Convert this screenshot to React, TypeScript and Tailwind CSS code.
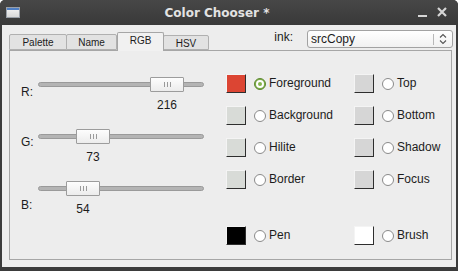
import React from 'react';

const SANS = "font-['Liberation_Sans',Arial,sans-serif]";

const sliders = [
  { name: 'R', value: 216, labelTop: 'mt-[8px]' },
  { name: 'G', value: 73, labelTop: 'mt-[6px]' },
  { name: 'B', value: 54, labelTop: 'mt-[17px]' },
];

const TRACK_W = 166;
const THUMB_W = 34;

function Slider({ name, value, labelTop }: { name: string; value: number; labelTop: string }) {
  const left = Math.round((value / 255) * (TRACK_W - THUMB_W));
  return (
    <div className="flex items-start mb-[16px]">
      <div className={`w-[17px] text-[12px] leading-[15px] ${labelTop}`}>{name}:</div>
      <div className="w-[166px]">
        <div className="relative h-[15px]">
          <div className="absolute left-0 right-0 top-[5px] h-[5px] rounded-full bg-[#b4b4b4] border border-[#9a9a9a]" />
          <div
            className="absolute top-0 h-[15px] w-[34px] bg-gradient-to-b from-[#fdfdfd] to-[#ececec] border border-[#9c9c9c] rounded-[1px] flex items-center justify-center gap-[2px]"
            style={{ left }}
          >
            <span className="w-px h-[5px] bg-[#9a9a9a]" />
            <span className="w-px h-[5px] bg-[#9a9a9a]" />
            <span className="w-px h-[5px] bg-[#9a9a9a]" />
          </div>
        </div>
        <div className="mt-[6px] h-[15px]" style={{ paddingLeft: left }}>
          <div className="w-[34px] text-center text-[12px] leading-[15px]">{value}</div>
        </div>
      </div>
    </div>
  );
}

function Radio({ checked }: { checked?: boolean }) {
  if (checked) {
    return (
      <span className="w-[12px] h-[12px] rounded-full bg-[#7fae4a] border border-[#5f8a33] flex items-center justify-center">
        <span className="w-[8px] h-[8px] rounded-full bg-white flex items-center justify-center">
          <span className="w-[4px] h-[4px] rounded-full bg-[#86b54f]" />
        </span>
      </span>
    );
  }
  return <span className="w-[12px] h-[12px] rounded-full bg-white border border-[#8a8a8a]" />;
}

function Swatch({ color }: { color: string }) {
  return (
    <div
      className={`w-[20px] h-[19px] border-t border-l border-t-[#f4f4f4] border-l-[#f4f4f4] border-b border-r border-b-[#2e2e2e] border-r-[#2e2e2e] ${color}`}
    />
  );
}

function ColorItem({ color, label, checked }: { color: string; label: string; checked?: boolean }) {
  return (
    <div className="flex items-center h-[19px]">
      <Swatch color={color} />
      <div className="ml-[8px] flex">
        <Radio checked={checked} />
      </div>
      <span className="ml-[3px] text-[12px] leading-[15px]">{label}</span>
    </div>
  );
}

const tabs = [
  { name: 'Palette', w: 'w-[58px]', h: 'h-[16px]' },
  { name: 'Name', w: 'w-[51px]', h: 'h-[16px]' },
  { name: 'RGB', w: 'w-[47px]', h: 'h-[19px]', active: true },
  { name: 'HSV', w: 'w-[46px]', h: 'h-[15px]' },
];

export default function App() {
  return (
    <div className={`w-[458px] h-[271px] bg-white ${SANS} text-[#1c1c1c]`}>
      <div className="w-full h-full rounded-t-[5px] bg-[#3b3b3b] flex flex-col overflow-hidden">
        {/* title bar */}
        <div className="h-[25px] relative flex items-center justify-center pr-[24px] bg-gradient-to-b from-[#474747] to-[#393939]">
          <div className="absolute left-[6px] top-[7px] w-[14px] h-[11px] border border-[#9aa0a8] bg-gradient-to-b from-[#f4f4f4] to-[#d8d8d8]">
            <div className="h-[2px] bg-[#4f7fc4]" />
          </div>
          <span className="font-['DejaVu_Sans',sans-serif] font-bold text-[12px] text-[#e2e2e2]">Color Chooser *</span>
          <div className="absolute right-[11px] top-[7px] flex items-center gap-[10px]">
            <div className="w-[9px] h-[2px] bg-[#d6d6d6] mt-[7px]" />
            <svg width="10" height="10" viewBox="0 0 10 10">
              <path d="M1 1L9 9M9 1L1 9" stroke="#d6d6d6" strokeWidth="2.2" />
            </svg>
          </div>
        </div>

        {/* body */}
        <div className="flex-1 mx-[2px] mb-[4px] bg-[#ededed] flex flex-col pl-[7px] pr-[3px]">
          <div className="h-[25px] flex">
            <div className="flex items-end">
              {tabs.map((t) =>
                t.active ? (
                  <div
                    key={t.name}
                    className={`${t.w} ${t.h} -mb-px relative z-10 bg-[#f1f1f1] border border-b-0 border-[#a6a6a6] rounded-t-[2px] text-[10px] leading-[16px] text-center`}
                  >
                    {t.name}
                  </div>
                ) : (
                  <div
                    key={t.name}
                    className={`${t.w} ${t.h} bg-[#e2e2e2] border border-[#b0b0b0] -ml-px first:ml-0 rounded-t-[2px] text-[10px] leading-[15px] text-center`}
                  >
                    {t.name}
                  </div>
                )
              )}
            </div>
            <div className="ml-auto flex items-start mt-[5px]">
              <span className="text-[12px] leading-[15px] mr-[14px]">ink:</span>
              <div className="w-[146px] h-[18px] border border-[#a2a2a2] rounded-[3px] bg-gradient-to-b from-white to-[#f1f1f1] flex items-center">
                <span className="pl-[3px] text-[12px] leading-[15px] flex-1">srcCopy</span>
                <div className="w-px h-[11px] bg-[#b8b8b8]" />
                <svg className="mx-[5px]" width="8" height="12" viewBox="0 0 8 12">
                  <path d="M1 4.5L4 1.5L7 4.5M1 7.5L4 10.5L7 7.5" fill="none" stroke="#555" strokeWidth="1.1" />
                </svg>
              </div>
            </div>
          </div>

          {/* tab pane */}
          <div className="w-[443px] h-[210px] border border-[#a6a6a6] flex">
            <div className="w-[216px] pl-[11px] pt-[26px]">
              {sliders.map((s) => (
                <Slider key={s.name} {...s} />
              ))}
            </div>
            <div className="pt-[23px]">
              <div className="grid grid-cols-[128px_auto] gap-y-[13px]">
                <ColorItem color="bg-[#dc4533]" label="Foreground" checked />
                <ColorItem color="bg-[#d6d6d6]" label="Top" />
                <ColorItem color="bg-[#d8dbd7]" label="Background" />
                <ColorItem color="bg-[#d6d6d6]" label="Bottom" />
                <ColorItem color="bg-[#d8dbd7]" label="Hilite" />
                <ColorItem color="bg-[#d6d6d6]" label="Shadow" />
                <ColorItem color="bg-[#d8dbd7]" label="Border" />
                <ColorItem color="bg-[#d6d6d6]" label="Focus" />
              </div>
              <div className="grid grid-cols-[128px_auto] mt-[37px]">
                <ColorItem color="bg-black" label="Pen" />
                <ColorItem color="bg-white" label="Brush" />
              </div>
            </div>
          </div>
        </div>
      </div>
    </div>
  );
}
